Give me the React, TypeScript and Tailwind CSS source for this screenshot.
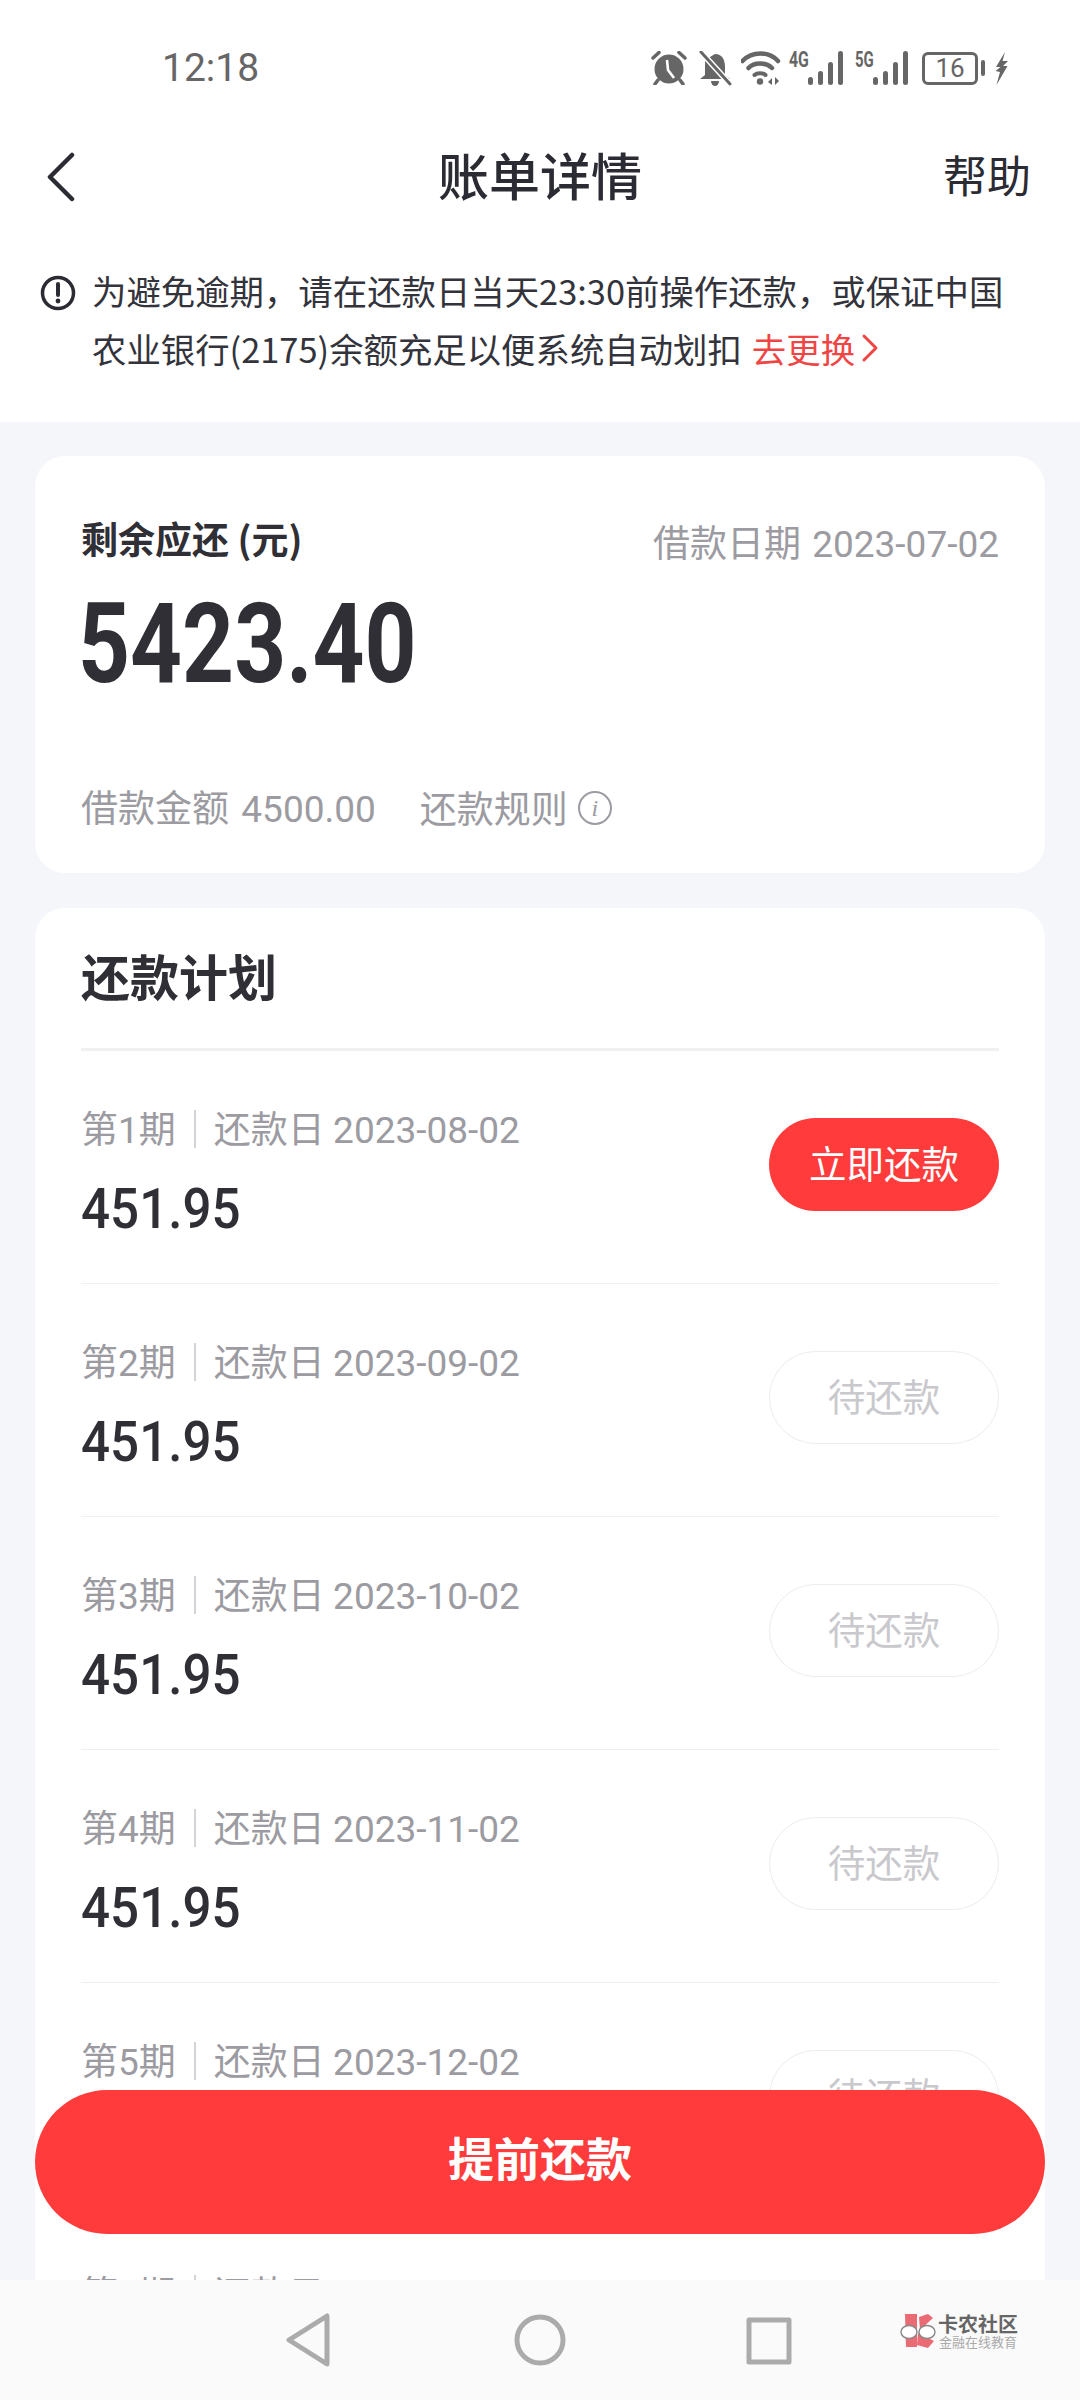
const cjk = { fontFamily: '"Noto Sans CJK SC", "Noto Sans", sans-serif' }
const num = { fontFamily: 'Roboto, "Noto Sans CJK SC", sans-serif' }

const plans = [
  { no: 1, date: "2023-08-02", current: true },
  { no: 2, date: "2023-09-02" },
  { no: 3, date: "2023-10-02" },
  { no: 4, date: "2023-11-02" },
  { no: 5, date: "2023-12-02" },
  { no: 6, date: "2024-01-02" },
]

function Bars() {
  return (
    <svg width="36" height="34" viewBox="0 0 36 34" fill="#666">
      <rect x="0" y="26" width="5" height="8" rx="2.5" />
      <rect x="10" y="20" width="5" height="14" rx="2.5" />
      <rect x="20" y="11" width="5" height="23" rx="2.5" />
      <rect x="30" y="0" width="5" height="34" rx="2.5" />
    </svg>
  )
}

function StatusBar() {
  return (
    <div className="h-[136px] flex items-center justify-between pl-[162px] pr-[72px] text-[#666]">
      <span className="text-[39px] leading-none" style={num}>12:18</span>
      <div className="flex items-center h-[36px]">
        <svg width="36" height="34" viewBox="0 0 36 34" fill="#666">
          <circle cx="18" cy="18" r="14.5" />
          <path d="M2 7 L8 1.5 M34 7 L28 1.5" stroke="#666" strokeWidth="3.5" strokeLinecap="round" />
          <path d="M7 29 L4 33 M29 29 L32 33" stroke="#666" strokeWidth="3.5" strokeLinecap="round" />
          <path d="M16 9 L17 19 L23 27" stroke="#fff" strokeWidth="2.6" fill="none" />
        </svg>
        <svg className="ml-[12px]" width="33" height="35" viewBox="0 0 33 35" fill="#666">
          <path d="M16 3 C24 3 26 10 26 16 L26 24 L31 28 L1 28 L6 24 L6 9 Z" />
          <path d="M12 30 L20 30 C20 33 18 35 16 35 C14 35 12 33 12 30 Z" />
          <path d="M2 1 L31 33" stroke="#fff" strokeWidth="6" />
          <path d="M2 1 L31 33" stroke="#666" strokeWidth="3" strokeLinecap="round" />
        </svg>
        <svg className="ml-[9px]" width="40" height="34" viewBox="0 0 40 34" fill="none" stroke="#666">
          <path d="M1.5 10 C11 0 28 0 37 10" strokeWidth="4.5" strokeLinecap="round" />
          <path d="M7.5 17 C13 11 25 11 31 17" strokeWidth="4.5" strokeLinecap="round" />
          <path d="M13.5 24 C16 21.5 22 21.5 24.5 24" strokeWidth="4" strokeLinecap="round" />
          <circle cx="19" cy="30.5" r="3.2" fill="#666" stroke="none" />
          <path d="M27 31 L31 27 L31 34 Z M34 26 L34 34 L38 30 Z" fill="#666" stroke="none" />
        </svg>
        <div className="ml-[8px] flex items-start">
          <span className="text-[22px] leading-[17px] font-bold w-[19px] origin-left scale-x-[.72] whitespace-nowrap" style={num}>4G</span>
          <Bars />
        </div>
        <div className="ml-[11px] flex items-start">
          <span className="text-[22px] leading-[17px] font-bold w-[18px] origin-left scale-x-[.68] whitespace-nowrap" style={num}>5G</span>
          <Bars />
        </div>
        <div className="ml-[13px] w-[56px] h-[33px] border-[3px] border-[#666] rounded-[6px] flex items-center justify-center text-[26px] leading-none" style={num}>16</div>
        <div className="ml-[3px] w-[4px] h-[16px] bg-[#666] rounded-[2px]" />
        <svg className="ml-[10px]" width="13" height="33" viewBox="0 0 13 33" fill="#666">
          <path d="M10 0 L1 15 L5.5 15 L0.5 19 L5 20 L1.5 33 L12.5 14 L8 14 L13 9 L7.5 9 Z" />
        </svg>
      </div>
    </div>
  )
}

function Header() {
  return (
    <div className="bg-white">
      <StatusBar />
      <div className="h-[82px] flex items-center justify-between relative pl-[46px] pr-[49px]">
        <svg width="30" height="50" viewBox="0 0 30 50" fill="none" stroke="#2b2b33" strokeWidth="4.5" strokeLinecap="round" strokeLinejoin="round">
          <path d="M26 3 L4 25 L26 47" />
        </svg>
        <h1 className="absolute left-0 right-0 top-[-3px] h-full flex items-center justify-center text-[51px] leading-none font-medium text-[#2b2b33]" style={cjk}>账单详情</h1>
        <span className="text-[44px] leading-none text-[#2b2b33] mb-[6px]" style={cjk}>帮助</span>
      </div>
      <div className="flex pl-[40px] pr-[20px] pt-[43px] pb-[45px]">
        <svg className="shrink-0 mt-[14px]" width="36" height="36" viewBox="0 0 36 36" fill="none">
          <circle cx="18" cy="18" r="15.5" stroke="#2b2b33" strokeWidth="3.5" />
          <path d="M18 9 L18 20" stroke="#2b2b33" strokeWidth="4" strokeLinecap="round" />
          <circle cx="18" cy="26" r="2.4" fill="#2b2b33" />
        </svg>
        <p className="ml-[16px] text-[34.4px] leading-[58px] text-[#33333b] whitespace-nowrap" style={cjk}>
          为避免逾期，请在还款日当天23:30前操作还款，或保证中国
          <br />
          农业银行(2175)余额充足以便系统自动划扣
          <span className="ml-[10px] text-[#f04545] inline-flex items-center">
            去更换
            <svg className="ml-[6px]" width="18" height="30" viewBox="0 0 18 30" fill="none" stroke="#f04545" strokeWidth="3" strokeLinecap="round" strokeLinejoin="round">
              <path d="M3 3 L15 15 L3 27" />
            </svg>
          </span>
        </p>
      </div>
    </div>
  )
}

function Summary() {
  return (
    <div className="bg-white rounded-[30px] mt-[34px] pt-[63px] pb-[43px] px-[46px]">
      <div className="flex justify-between items-center h-[44px]">
        <span className="text-[37px] font-bold text-[#2f2f35] mb-[4px] whitespace-nowrap" style={cjk}>剩余应还 (元)</span>
        <span className="text-[37px] text-[#9b9ba1] mt-[4px] whitespace-nowrap" style={cjk}>
          借款日期 <span className="ml-[3px]" style={num}>2023-07-02</span>
        </span>
      </div>
      <div className="mt-[16px] -ml-[3px] h-[130px] leading-[130px] text-[112px] font-bold text-[#2f2f35] origin-left scale-x-[.81]" style={num}>5423.40</div>
      <div className="mt-[77px] h-[44px] flex items-center text-[37px] text-[#9b9ba1] whitespace-nowrap" style={cjk}>
        <span>借款金额 <span className="ml-[4px]" style={num}>4500.00</span></span>
        <span className="ml-[44px]">还款规则</span>
        <span className="ml-[10px] w-[34px] h-[34px] rounded-full border-[2px] border-[#9b9ba1] flex items-center justify-center text-[24px] italic leading-none" style={{ fontFamily: '"Liberation Serif", serif' }}>i</span>
      </div>
    </div>
  )
}

function PlanRow({ no, date, current }: { no: number; date: string; current?: boolean }) {
  return (
    <div className="h-[233px] flex items-center justify-between border-b-[1.5px] border-[#f0f0f2]">
      <div className="pt-[14px]">
        <div className="flex items-center h-[44px] text-[37px] text-[#9b9ba1] whitespace-nowrap" style={cjk}>
          <span>第<span style={num}>{no}</span>期</span>
          <span className="mx-[18px] w-[2px] h-[38px] bg-[#d4d4d8]" />
          <span>还款日 <span style={num}>{date}</span></span>
        </div>
        <div className="mt-[26px] text-[55px] leading-[64px] font-medium text-[#2f2f35] origin-left scale-x-[.93]" style={num}>451.95</div>
      </div>
      {current ? (
        <button className="w-[230px] h-[93px] mb-[6px] pb-[3px] rounded-full bg-[#ff3b3b] text-white text-[37.5px]" style={cjk}>立即还款</button>
      ) : (
        <button className="w-[230px] h-[93px] mb-[6px] pb-[3px] rounded-full border-[1.5px] border-[#ececee] text-[#c9c9cd] text-[37.5px]" style={cjk}>待还款</button>
      )}
    </div>
  )
}

function NavBar() {
  return (
    <div className="absolute left-0 right-0 bottom-0 h-[120px] bg-[#fafafa]">
      <svg width="46" height="54" viewBox="0 0 46 54" fill="none" stroke="#ababab" strokeWidth="5" strokeLinejoin="round" className="absolute left-[286px] top-[33px]">
        <path d="M41 3 L41 51 L3 27 Z" />
      </svg>
      <svg width="52" height="54" viewBox="0 0 52 54" fill="none" stroke="#ababab" strokeWidth="5" className="absolute left-[514px] top-[33px]">
        <circle cx="26" cy="27" r="23" />
      </svg>
      <svg width="46" height="48" viewBox="0 0 46 48" fill="none" stroke="#ababab" strokeWidth="5" strokeLinejoin="round" className="absolute left-[746px] top-[37px]">
        <rect x="3" y="3" width="40" height="42" />
      </svg>
      <div className="absolute left-[900px] top-[33px] flex items-center">
        <svg width="36" height="35" viewBox="0 0 36 35">
          <path d="M5 0 L17 0 L17 33 L6 33 Z" fill="#ea6b74" />
          <path d="M19 3 L28 0 L33 4 L20 16 Z" fill="#ea6b74" />
          <path d="M18 19 L34 27 L28 34 L17 31 Z" fill="#ea6b74" />
          <ellipse cx="9" cy="18" rx="8" ry="6.5" fill="#fff" stroke="#888" strokeWidth="1.4" />
          <ellipse cx="27" cy="18" rx="8" ry="6.5" fill="#fff" stroke="#888" strokeWidth="1.4" />
        </svg>
        <div className="ml-[2px] text-center" style={cjk}>
          <div className="text-[20px] leading-[22px] font-bold text-[#666] whitespace-nowrap">卡农社区</div>
          <div className="text-[13px] leading-[14px] text-[#aaa] whitespace-nowrap">金融在线教育</div>
        </div>
      </div>
    </div>
  )
}

export default function App() {
  return (
    <div className="relative w-[1080px] h-[2400px] overflow-hidden bg-[#f5f6fa]">
      <Header />
      <div className="px-[35px]">
        <Summary />
        <div className="bg-white rounded-[30px] mt-[35px] px-[46px]">
          <div className="h-[143px] pb-[6px] flex items-center border-b-[3px] border-[#f0f0f2] text-[49px] font-bold text-[#2f2f35]" style={cjk}>还款计划</div>
          {plans.map(p => <PlanRow key={p.no} {...p} />)}
        </div>
      </div>
      <button className="absolute left-[35px] top-[2090px] w-[1010px] h-[144px] pb-[12px] rounded-full bg-[#ff3b3b] text-white text-[46px] font-bold" style={cjk}>提前还款</button>
      <NavBar />
    </div>
  )
}
